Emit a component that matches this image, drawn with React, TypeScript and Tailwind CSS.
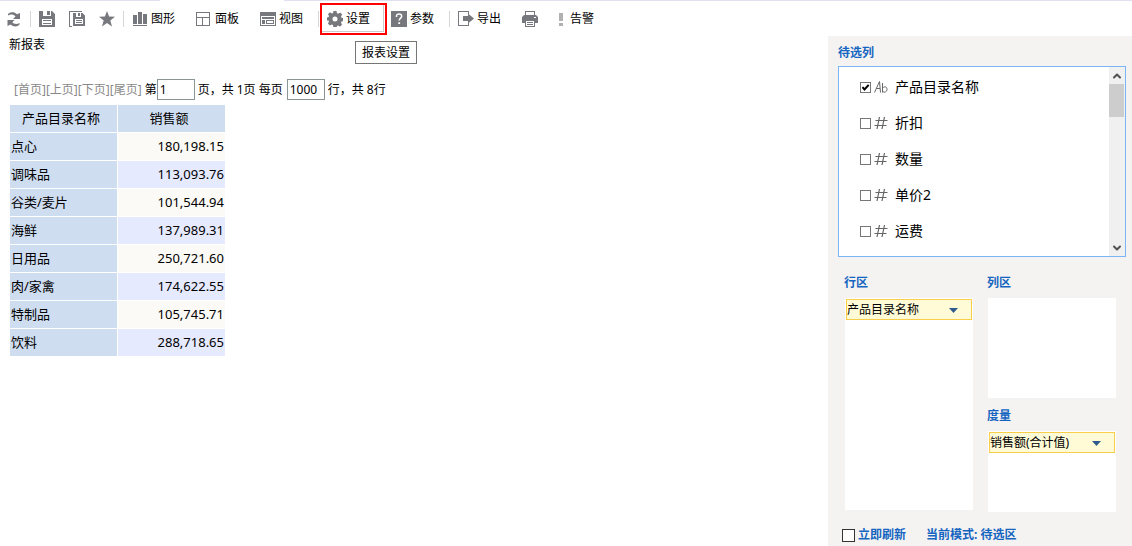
import React, { useState } from 'react';
import { ChevronDown, ChevronUp } from 'lucide-react';

type IconProps = { className?: string; children: React.ReactNode };

const Icon: React.FC<IconProps> = ({ className = 'w-4', children }) => (
  <svg
    viewBox={className === 'w-4' ? '0 0 16 16' : '0 0 8 16'}
    className={`h-4 shrink-0 text-[#77787d] ${className}`}
    fill="currentColor"
    aria-hidden="true"
  >
    {children}
  </svg>
);

const RefreshIcon = () => (
  <Icon>
    <path d="M2 3C4 .7 8.500 .3 11 3.200L14 2V8H7L9.500 5.500C7.500 3.200 4.500 3 2 4.500z" />
    <path d="M13.500 13.500C11.500 16 7.500 16.200 4.500 13.500L1.500 15V9H8.500L6.300 11.300C8 13.300 11 13.500 13.500 12z" />
  </Icon>
);

const SaveIcon = () => (
  <Icon>
    <path fillRule="evenodd" d="M0 0h4v5h8V0h1l3 3v13H0zM3 8v6h10V8z" />
    <path d="M8 0h3v4H8zM4 9h8v1H4zM4 12h8v1H4z" shapeRendering="crispEdges" />
  </Icon>
);

const SaveAsIcon = () => (
  <Icon>
    <path d="M0 0h13v1H1v14h2v1H0z" shapeRendering="crispEdges" />
    <path fillRule="evenodd" d="M4 2h3v4h5V2h1.500L16 4.500V15H4zM6 8v5h8V8z" />
    <path d="M9 2h2v3H9zM7 9h6v1H7zM7 11h6v1H7z" shapeRendering="crispEdges" />
  </Icon>
);

const StarIcon = () => (
  <Icon>
    <path d="M8 0l2.100 5.600 5.900.2-4.700 3.700L13 15.500 8 12.100 3 15.500l1.700-6L0 5.800l5.900-.2z" />
  </Icon>
);

const ChartIcon = () => (
  <Icon>
    <path d="M1 4h4v9H1zM6 1h4v12H6zM11 3h4v10h-4zM1 14h14v1H1z" shapeRendering="crispEdges" />
  </Icon>
);

const PanelIcon = () => (
  <Icon>
    <path fillRule="evenodd" d="M0 1h14v14H0zM1 2v4h12V2zM1 7v7h5V7zM7 7v7h6V7z" shapeRendering="crispEdges" />
  </Icon>
);

const ViewIcon = () => (
  <Icon>
    <path
      fillRule="evenodd"
      d="M0 1h16v14H0zM1 5v9h14V5zM2 6h12v2H2zM2 9h3v4H2zM6 9h8v4H6zM7 10v2h6v-2z"
      shapeRendering="crispEdges"
    />
  </Icon>
);

const GearIcon = () => (
  <Icon>
    <path
      fillRule="evenodd"
      d="M6.500 0h3l.5 2.200 1.200.5 1.900-1.200 2.100 2.100-1.200 1.900.5 1.200 2 .4v2.900l-2 .5-.5 1.200 1.100 1.900-2.100 2.100-1.800-1.200-1.200.5-.5 2h-3L6 13.900l-1.200-.4-1.900 1.100-2-2 1.100-1.900-.5-1.200L0 9.500v-3l1.600-.4.5-1.200L.9 3.200 3 1.300l1.900 1.200L6 2zM8 5.500a2.500 2.500 0 1 0 0 5 2.500 2.500 0 0 0 0-5z"
    />
  </Icon>
);

const HelpIcon = () => (
  <Icon>
    <path d="M0 0h16v16H0z" />
    <path d="M5.500 6V5c0-1.300 1-2 2.500-2s2.700.7 2.700 2.200c0 1.900-2.500 2-2.500 4.300" fill="none" stroke="#fff" strokeWidth="1.500" />
    <path d="M7.300 11.200h1.800v1.800H7.300z" fill="#fff" />
  </Icon>
);

const ExportIcon = () => (
  <Icon>
    <path d="M0 0h11v3h-1V1H1v13h9v-2h1v3H0z" shapeRendering="crispEdges" />
    <path d="M5 5h5V2.500L16 7.500 10 12.500V10H5z" />
  </Icon>
);

const PrintIcon = () => (
  <Icon>
    <path d="M3 0h10v4h-1V1H4v3H3z" shapeRendering="crispEdges" />
    <path fillRule="evenodd" d="M2 4h12l2 2v6h-3V9H3v3H0V6zM12 6v1h2V6z" />
    <path fillRule="evenodd" d="M3 9h10v7H3zM4 10v5h8v-5zM5 11h6v1H5zM5 13h6v1H5z" shapeRendering="crispEdges" />
  </Icon>
);

const AlertIcon = () => (
  <Icon className="w-2">
    <path d="M0 2h4v8H0zM0 12h4v3H0z" fill="#b1b1b1" shapeRendering="crispEdges" />
  </Icon>
);

const TextTypeIcon = () => (
  <svg viewBox="0 0 14 12" className="h-3 w-3.5 text-[#666]" fill="none" stroke="currentColor" aria-hidden="true">
    <path d="M.5 11.500L5.500 .5 6.500 11.500M2.300 7.500H6" />
    <path d="M8.500 2v9.500M8.500 7.500C9.500 5.300 13 5 13 8.300S9.500 11.800 8.500 10" />
  </svg>
);

const NumberTypeIcon = () => (
  <svg viewBox="0 0 14 12" className="h-3 w-3.5 text-[#666]" fill="none" stroke="currentColor" aria-hidden="true">
    <path d="M5.500 0L3 12M10.500 0L8 12" strokeWidth="1.200" />
    <path d="M1.500 3.500H13.500M.5 8.500H12.500" />
  </svg>
);

const ToolButton: React.FC<{ icon: React.ReactNode; label: string; showLabel?: boolean }> = ({
  icon,
  label,
  showLabel = true,
}) => (
  <button type="button" aria-label={label} className="flex h-6 items-center gap-[3px] whitespace-nowrap">
    {icon}
    {showLabel && <span>{label}</span>}
  </button>
);

const Separator = () => <span className="h-4 w-px shrink-0 bg-[#d6d6da]" />;

const Toolbar = () => (
  <header>
    <div className="flex h-px">
      <div className="w-40 bg-[#e2e0ee]" />
      <div className="w-[124px]" />
      <div className="flex-1 bg-[#e2e0ee]" />
    </div>
    <div className="flex h-[35px] items-center gap-2 pl-1.5">
      <ToolButton icon={<RefreshIcon />} label="刷新" showLabel={false} />
      <Separator />
      <div className="flex gap-3.5">
        <ToolButton icon={<SaveIcon />} label="保存" showLabel={false} />
        <ToolButton icon={<SaveAsIcon />} label="另存为" showLabel={false} />
        <ToolButton icon={<StarIcon />} label="收藏" showLabel={false} />
      </div>
      <Separator />
      <div className="flex gap-[21px] pr-[7px]">
        <ToolButton icon={<ChartIcon />} label="图形" />
        <ToolButton icon={<PanelIcon />} label="面板" />
        <ToolButton icon={<ViewIcon />} label="视图" />
      </div>
      <Separator />
      <div className="flex gap-[21px] pr-[7px]">
        <div className="relative">
          <ToolButton icon={<GearIcon />} label="设置" />
          <span className="pointer-events-none absolute -top-1 -right-[17px] -bottom-1 -left-[7px] border-2 border-[#f00] p-px pt-0 pl-0">
            <span className="block h-[27px] border-r border-b border-[#ccc]" />
          </span>
          <div
            role="tooltip"
            className="absolute top-[34px] left-7 z-10 border border-[#767676] bg-white px-1.5 leading-[21px] whitespace-nowrap"
          >
            报表设置
          </div>
        </div>
        <ToolButton icon={<HelpIcon />} label="参数" />
      </div>
      <Separator />
      <div className="flex gap-[21px]">
        <ToolButton icon={<ExportIcon />} label="导出" />
        <ToolButton icon={<PrintIcon />} label="打印" showLabel={false} />
        <ToolButton icon={<AlertIcon />} label="告警" />
      </div>
    </div>
  </header>
);

const rows = [
  { name: '点心', sales: '180,198.15' },
  { name: '调味品', sales: '113,093.76' },
  { name: '谷类/麦片', sales: '101,544.94' },
  { name: '海鲜', sales: '137,989.31' },
  { name: '日用品', sales: '250,721.60' },
  { name: '肉/家禽', sales: '174,622.55' },
  { name: '特制品', sales: '105,745.71' },
  { name: '饮料', sales: '288,718.65' },
];

const Pager = () => {
  const [page, setPage] = useState('1');
  const [size, setSize] = useState('1000');

  return (
    <div className="flex items-center gap-[3px] pl-[5px] whitespace-nowrap">
      <nav className="flex text-[#888]">
        <a href="#first">[首页]</a>
        <a href="#prev">[上页]</a>
        <a href="#next">[下页]</a>
        <a href="#last">[尾页]</a>
      </nav>
      <div className="flex items-center">
        <label htmlFor="page">第</label>
        <input
          id="page"
          value={page}
          onChange={(e) => setPage(e.target.value)}
          className="h-[21px] w-[38px] border border-[#8a9595] px-0.5"
        />
      </div>
      <span>页，共 1页</span>
      <label htmlFor="page-size" className="pr-px">
        每页
      </label>
      <input
        id="page-size"
        value={size}
        onChange={(e) => setSize(e.target.value)}
        className="h-[21px] w-[38px] border border-[#8a9595] px-0.5"
      />
      <span>行，共 8行</span>
    </div>
  );
};

const ReportTable = () => (
  <table className="mt-1 border-separate border-spacing-px text-[13px] leading-[27px]">
    <thead>
      <tr className="bg-[#cfddf0]">
        <th className="w-[107px] py-0 pr-[5px] pl-0 font-normal">产品目录名称</th>
        <th className="w-[107px] py-0 pr-[5px] pl-0 font-normal">销售额</th>
      </tr>
    </thead>
    <tbody>
      {rows.map((row) => (
        <tr key={row.name} className="bg-[#fbfaf6] even:bg-[#e6eaff]">
          <td className="bg-[#cfddf0] px-px py-0">{row.name}</td>
          <td className="px-px py-0 text-right">{row.sales}</td>
        </tr>
      ))}
    </tbody>
  </table>
);

const CheckBox: React.FC<{ id: string; className: string; checked: boolean; onChange: () => void }> = ({
  id,
  className,
  checked,
  onChange,
}) => (
  <span className="relative flex">
    <input
      id={id}
      type="checkbox"
      checked={checked}
      onChange={onChange}
      className={`appearance-none border bg-white ${className}`}
    />
    {checked && (
      <svg viewBox="0 0 11 11" className="pointer-events-none absolute inset-0" fill="none" stroke="#000" strokeWidth="2">
        <path d="M2.500 5.200L4.500 7.500L8.700 2.800" />
      </svg>
    )}
  </span>
);

const columns = ['产品目录名称', '折扣', '数量', '单价2', '运费'];

const ColumnList = () => {
  const [picked, setPicked] = useState<string[]>(['产品目录名称']);

  const toggle = (name: string) => {
    setPicked(picked.includes(name) ? picked.filter((p) => p !== name) : [...picked, name]);
  };

  return (
    <div className="flex border border-[#7ab6f7] bg-white">
      <ul className="flex-1 pt-0.5 pb-[7px] pl-[21px]">
        {columns.map((name, i) => (
          <li key={name} className="flex h-9 items-center">
            <CheckBox
              id={`col-${i}`}
              className="size-[11px] border-[#777]"
              checked={picked.includes(name)}
              onChange={() => toggle(name)}
            />
            <label htmlFor={`col-${i}`} className="flex items-center gap-[7px] pl-[3px] text-sm">
              {i === 0 ? <TextTypeIcon /> : <NumberTypeIcon />}
              {name}
            </label>
          </li>
        ))}
      </ul>
      <div className="flex w-4 flex-col bg-[#f0f0f0] pr-px">
        <button type="button" aria-label="向上" className="flex h-[17px] items-center justify-center text-[#505050]">
          <ChevronUp className="size-3" strokeWidth={4} />
        </button>
        <div className="h-[33px] bg-[#cdcdcd]" />
        <button
          type="button"
          aria-label="向下"
          className="mt-auto flex h-[17px] items-center justify-center text-[#505050]"
        >
          <ChevronDown className="size-3" strokeWidth={4} />
        </button>
      </div>
    </div>
  );
};

const Zone: React.FC<{ id: string; title: string; height: string; field?: string }> = ({
  id,
  title,
  height,
  field,
}) => (
  <section>
    <h2 className="leading-[18px] font-bold text-[#1565c0]">
      <label htmlFor={field ? id : undefined}>{title}</label>
    </h2>
    <div className={`mt-1.5 ml-px bg-white p-px ${height}`}>
      {field && (
        <div className="relative">
          <select id={id} className="block h-[21px] w-full appearance-none border border-[#fbce4a] bg-[#fffbd6]">
            <option>{field}</option>
          </select>
          <svg viewBox="0 0 9 5" className="pointer-events-none absolute top-[9px] right-3.5 h-[5px] w-[9px]" fill="#2f5b8c">
            <path d="M0 0h9L4.500 5z" />
          </svg>
        </div>
      )}
    </div>
  </section>
);

const SidePanel = () => {
  const [live, setLive] = useState(false);

  return (
    <aside className="w-[304px] shrink-0 bg-[#f4f3f2] pt-2 pr-1.5 pl-2.5">
      <h2 className="mb-1 leading-[18px] font-bold text-[#1565c0]">待选列</h2>
      <ColumnList />
      <div className="mt-[17px] grid grid-cols-2 gap-3.5 pr-2.5 pl-1.5">
        <Zone id="row-zone" title="行区" height="h-[212px]" field="产品目录名称" />
        <div className="flex flex-col gap-[9px]">
          <Zone id="col-zone" title="列区" height="h-[100px]" />
          <Zone id="measure-zone" title="度量" height="h-[81px]" field="销售额(合计值)" />
        </div>
      </div>
      <footer className="mt-3.5 flex items-center pl-1 leading-[18px] font-bold text-[#1565c0]">
        <CheckBox id="live" className="size-[13px] border-[#333]" checked={live} onChange={() => setLive(!live)} />
        <label htmlFor="live" className="pl-[3px]">
          立即刷新
        </label>
        <span className="pl-5">当前模式: 待选区</span>
      </footer>
    </aside>
  );
};

const App: React.FC = () => (
  <div className="flex min-h-screen flex-col bg-white font-['Noto_Sans','Noto_Sans_CJK_SC',sans-serif] text-xs text-black">
    <Toolbar />
    <div className="flex flex-1">
      <main className="min-w-0 flex-1 pt-px pl-[9px]">
        <h1 className="mb-[26px]">新报表</h1>
        <Pager />
        <ReportTable />
      </main>
      <SidePanel />
    </div>
  </div>
);

export default App;
